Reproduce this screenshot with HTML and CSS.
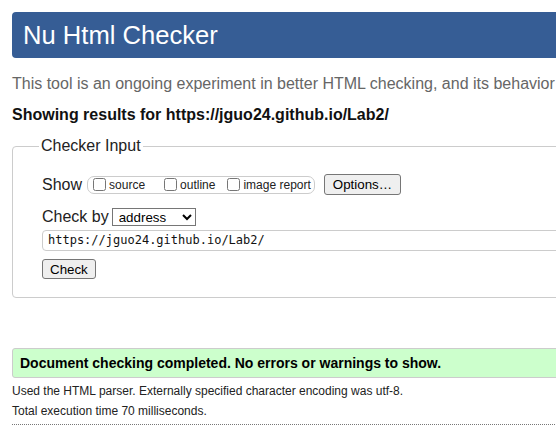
FILE: index.html
```html
<!DOCTYPE html>
<html>
<head>
<meta charset="utf-8">
<title>Nu Html Checker</title>
<link rel="stylesheet" href="styles.css">
</head>
<body>
<div class="page">
  <h1 class="title">Nu Html Checker</h1>
  <p class="intro">This tool is an ongoing experiment in better HTML checking, and its behavior remains subject to change</p>
  <p class="showing">Showing results for https://jguo24.github.io/Lab2/</p>
  <fieldset class="input-box">
    <legend class="legend">Checker Input</legend>
    <div class="row row-show">
      <span class="label">Show</span>
      <span class="opts">
        <label class="opt opt-source"><input type="checkbox" class="cb"><span>source</span></label>
        <label class="opt opt-outline"><input type="checkbox" class="cb"><span>outline</span></label>
        <label class="opt opt-image"><input type="checkbox" class="cb"><span>image report</span></label>
      </span>
      <button class="btn btn-options" type="button">Options…</button>
    </div>
    <div class="row row-by">
      <span class="label">Check by</span>
      <select class="select"><option>address</option></select>
    </div>
    <div class="url">https://jguo24.github.io/Lab2/</div>
    <button class="btn btn-check" type="button">Check</button>
  </fieldset>
  <div class="success">Document checking completed. No errors or warnings to show.</div>
  <p class="meta meta-first">Used the HTML parser. Externally specified character encoding was utf-8.</p>
  <p class="meta">Total execution time 70 milliseconds.</p>
  <div class="rule"></div>
</div>
</body>
</html>
```
FILE: styles.css
```css
html, body {
  margin: 0;
  padding: 0;
  overflow: hidden;
  background: #fff;
}
body {
  font-family: "Liberation Sans", Arial, sans-serif;
  color: #222;
}
.page {
  width: 900px;
  padding: 12px 0 0 12px;
}
.title {
  margin: 0;
  height: 46px;
  line-height: 46px;
  padding: 0 11px;
  background: #365d95;
  color: #fff;
  font-size: 25.6px;
  font-weight: normal;
  border-radius: 4px 0 0 4px;
}
.intro {
  margin: 17px 0 0;
  font-size: 16px;
  line-height: 18px;
  color: #666;
  white-space: nowrap;
}
.showing {
  margin: 13px 0 0;
  font-size: 16px;
  line-height: 18px;
  font-weight: bold;
  color: #111;
}
.input-box {
  margin: 13px 0 0;
  border: 1px solid #ccc;
  border-radius: 4px;
  padding: 0 0 18px 29px;
  min-width: 0;
}
.legend {
  margin-left: -3px;
  padding: 0 2px;
  font-size: 16px;
  line-height: 18px;
  color: #222;
}
.row {
  display: flex;
  align-items: center;
}
.row-show {
  margin-top: 19px;
  height: 21px;
}
.row-by {
  margin-top: 12px;
  height: 20px;
}
.label {
  font-size: 16px;
  line-height: 18px;
  color: #222;
}
.opts {
  display: flex;
  align-items: center;
  margin-left: 5px;
  height: 16px;
  padding: 0 3px 0 1px;
  border: 1px solid #ccc;
  border-radius: 7px;
}
.opt {
  display: flex;
  align-items: center;
  font-size: 12px;
  color: #222;
}
.opt-source { margin-right: 15px; }
.opt-outline { margin-right: 8px; }
.cb {
  margin: 0 3px 0 4px;
  width: 13px;
  height: 13px;
}
.btn {
  font-family: "Liberation Sans", Arial, sans-serif;
  font-size: 13.33px;
  color: #000;
  background: #efefef;
  border: 1px solid #767676;
  border-radius: 3px;
  padding: 0 7px;
}
.btn-options {
  margin-left: 9px;
  height: 21px;
  padding: 0 8px;
}
.select {
  margin-left: 3px;
  width: 84px;
  height: 18px;
  font-family: "Liberation Sans", Arial, sans-serif;
  font-size: 13.33px;
  color: #000;
  border: 1px solid #767676;
  border-radius: 0;
  padding: 0 0 0 2px;
  background: #fff;
}
.url {
  margin-top: 3px;
  height: 19px;
  line-height: 19px;
  border: 1px solid #ccc;
  border-radius: 4px;
  padding-left: 5px;
  font-family: "DejaVu Sans Mono", "Liberation Mono", monospace;
  font-size: 12px;
  color: #111;
}
.btn-check {
  display: block;
  margin-top: 8px;
  height: 20px;
}
.success {
  margin-top: 50px;
  height: 28px;
  line-height: 28px;
  padding: 0 7px;
  background: #ccffcc;
  border: 1px solid #ccc;
  border-radius: 3px;
  font-size: 14px;
  font-weight: bold;
  color: #000;
}
.meta {
  margin: 0;
  font-size: 12px;
  line-height: 20px;
  color: #222;
}
.meta-first {
  margin-top: 3px;
}
.rule {
  margin-top: 3px;
  border-top: 1px dotted #777;
  width: 545px;
}
```
